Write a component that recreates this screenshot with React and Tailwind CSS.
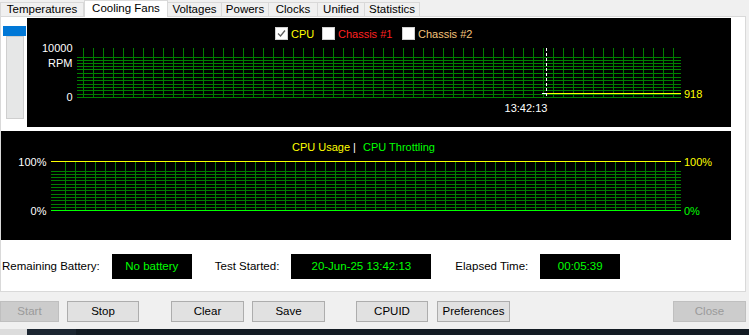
import React from "react";

const tabs = ["Temperatures", "Cooling Fans", "Voltages", "Powers", "Clocks", "Unified", "Statistics"];
const tabWidths = ["w-[84px]", "w-[84px]", "w-[55px]", "w-[48px]", "w-[50px]", "w-[48px]", "w-[56px]"];

const fanRows = [39.5, 42.5, 45.5, 48.5, 51.5, 55.5, 59.5, 62.5, 66.5, 69.5, 72.5, 76.5, 79.5];
const usageRows = Array.from({ length: 12 }, (_, i) => 39.5 + i * 3.33);

function CheckBox({ x, checked }) {
  return (
    <g>
      <rect x={x + 0.5} y={9.5} width={12} height={12} fill="#ffffff" stroke="#d0d0d0" />
      {checked && <path d={`M${x + 3} ${x ? 15.5 : 15.5} L${x + 5.5} 18 L${x + 10} 12.5`} stroke="#606060" strokeWidth="1.3" fill="none" />}
    </g>
  );
}

function FanGraph() {
  return (
    <div className="w-[704px] h-[109px] bg-black">
      <svg width="704" height="109" className="block" style={{ fontFamily: "'Liberation Sans', Arial, sans-serif" }}>
        <CheckBox x={248} checked />
        <text x="264" y="20" fontSize="11" fill="#ffff00">CPU</text>
        <CheckBox x={295} />
        <text x="311" y="20" fontSize="11" fill="#ff2020">Chassis #1</text>
        <CheckBox x={375} />
        <text x="391" y="20" fontSize="11" fill="#f4c27a">Chassis #2</text>

        {Array.from({ length: 60 }, (_, i) => (
          <line key={"v" + i} x1={56.5 + i * 10} x2={56.5 + i * 10} y1="30" y2="79.5" stroke="#008000" />
        ))}
        {fanRows.map((y) => (
          <line key={"h" + y} x1="50" x2="654" y1={y} y2={y} stroke="#008000" />
        ))}
        <line x1="518" x2="654" y1="75.5" y2="75.5" stroke="#ffff00" />
        <line x1="519.5" x2="519.5" y1="30" y2="80" stroke="#ffffff" strokeDasharray="3 2" />
        <line x1="515" x2="519" y1="75.5" y2="75.5" stroke="#ffffff" />

        <text x="45.5" y="34" fontSize="11" fill="#ffffff" textAnchor="end">10000</text>
        <text x="45.5" y="49" fontSize="11" fill="#ffffff" textAnchor="end">RPM</text>
        <text x="45.5" y="83" fontSize="11" fill="#ffffff" textAnchor="end">0</text>
        <text x="657" y="80" fontSize="11" fill="#ffff00">918</text>
        <text x="499" y="94" fontSize="11" fill="#ffffff" textAnchor="middle">13:42:13</text>
      </svg>
    </div>
  );
}

function UsageGraph() {
  return (
    <div className="w-[730px] h-[109px] bg-black">
      <svg width="730" height="109" className="block" style={{ fontFamily: "'Liberation Sans', Arial, sans-serif" }}>
        <text x="291" y="20" fontSize="11" fill="#ffff00">CPU Usage</text>
        <text x="352" y="20" fontSize="11" fill="#ffffff">|</text>
        <text x="362" y="20" fontSize="11" fill="#00ff00">CPU Throttling</text>

        {Array.from({ length: 62 }, (_, i) => (
          <line key={"v" + i} x1={64.5 + i * 10} x2={64.5 + i * 10} y1="30.5" y2="79.5" stroke="#008000" />
        ))}
        {usageRows.map((y) => (
          <line key={"h" + y} x1="50" x2="680" y1={Math.round(y) + 0.5} y2={Math.round(y) + 0.5} stroke="#008000" />
        ))}
        <line x1="50" x2="680" y1="30.5" y2="30.5" stroke="#ffff00" />
        <line x1="50" x2="680" y1="79.5" y2="79.5" stroke="#00ff00" />

        <text x="45.5" y="35" fontSize="11" fill="#ffffff" textAnchor="end">100%</text>
        <text x="45.5" y="84" fontSize="11" fill="#ffffff" textAnchor="end">0%</text>
        <text x="683" y="35" fontSize="11" fill="#ffff00">100%</text>
        <text x="683" y="84" fontSize="11" fill="#00ff00">0%</text>
      </svg>
    </div>
  );
}

function Readout({ width, value }) {
  return (
    <div className={`${width} h-[25px] bg-black text-[#00ff00] flex items-center justify-center`}>
      {value}
    </div>
  );
}

function Btn({ label, className, disabled }) {
  return (
    <button
      className={
        "h-[21px] border text-[11.5px] flex items-center justify-center " +
        (disabled ? "bg-[#cccccc] border-[#bfbfbf] text-[#9a9a9a] " : "bg-[#e1e1e1] border-[#adadad] text-black ") +
        className
      }
    >
      {label}
    </button>
  );
}

export default function App() {
  return (
    <div
      className="w-[749px] h-[335px] bg-[#f0f0f0] flex flex-col overflow-hidden text-[11.5px] text-black"
      style={{ fontFamily: "'Liberation Sans', Arial, sans-serif" }}
    >
      <div className="flex items-end h-[16px]">
        {tabs.map((t, i) =>
          i === 1 ? (
            <div
              key={t}
              className={`${tabWidths[i]} h-[17px] -mb-px relative z-10 bg-white border border-b-0 border-[#d9d9d9] flex items-start justify-center pt-px leading-[13px]`}
            >
              {t}
            </div>
          ) : (
            <div
              key={t}
              className={`${tabWidths[i]} h-[14px] bg-[#f0f0f0] border border-b-0 border-[#d9d9d9] flex items-center justify-center leading-[13px] ${i === 0 ? "" : "-ml-px"}`}
            >
              {t}
            </div>
          )
        )}
      </div>

      <div className="w-[746px] h-[276px] bg-white border border-[#d9d9d9] flex flex-col pt-px">
        <div className="flex h-[109px]">
          <div className="w-[26px] flex flex-col">
            <div className="mt-[8px] ml-[2px] w-[23px] h-[10px] bg-[#0078d7]" />
            <div className="ml-[5px] w-[18px] h-[83px] bg-[#e6e7e7] border border-[#cfcfcf]" />
          </div>
          <FanGraph />
        </div>

        <div className="mt-[4px]">
          <UsageGraph />
        </div>

        <div className="mt-[14px] h-[25px] flex items-center">
          <span className="ml-[1px]">Remaining Battery:</span>
          <div className="ml-[12px]">
            <Readout width="w-[80px]" value="No battery" />
          </div>
          <span className="ml-[23px]">Test Started:</span>
          <div className="ml-[12px]">
            <Readout width="w-[140px]" value="20-Jun-25 13:42:13" />
          </div>
          <span className="ml-[24px]">Elapsed Time:</span>
          <div className="ml-[12px]">
            <Readout width="w-[80px]" value="00:05:39" />
          </div>
        </div>
      </div>

      <div className="mt-[9px] flex h-[21px]">
        <Btn label="Start" disabled className="w-[59px]" />
        <Btn label="Stop" className="ml-[8px] w-[72px]" />
        <Btn label="Clear" className="ml-[32px] w-[73px]" />
        <Btn label="Save" className="ml-[8px] w-[73px]" />
        <Btn label="CPUID" className="ml-[31px] w-[72px]" />
        <Btn label="Preferences" className="ml-[9px] w-[73px]" />
        <Btn label="Close" disabled className="ml-[163px] w-[73px]" />
      </div>

      <div className="mt-auto h-[6px] flex">
        <div className="w-[27px] bg-[#dcdcdc]" />
        <div className="w-[49px] bg-[#1c2631]" />
        <div className="flex-1 bg-[#131b23]" />
      </div>
    </div>
  );
}
